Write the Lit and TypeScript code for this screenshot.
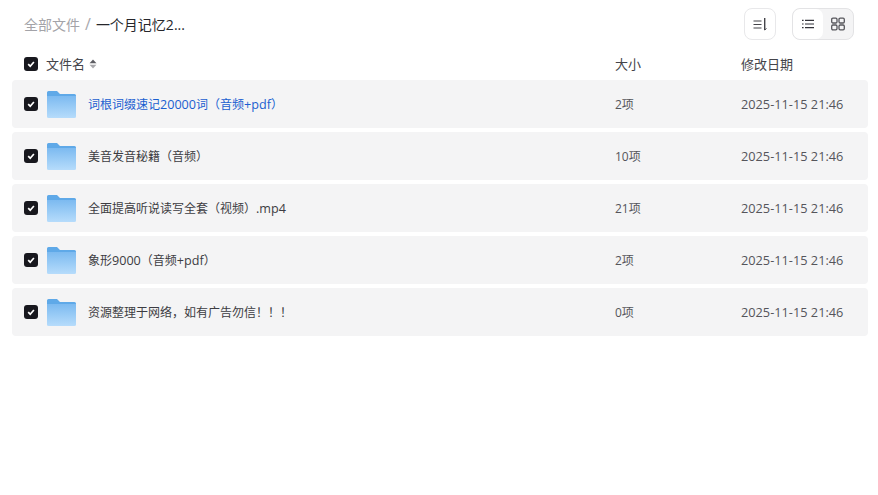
import { LitElement, html, css } from "lit";
import { customElement } from "lit/decorators.js";

const rows = [
  { name: "词根词缀速记20000词（音频+pdf）", size: "2项", active: true },
  { name: "美音发音秘籍（音频）", size: "10项" },
  { name: "全面提高听说读写全套（视频）.mp4", size: "21项" },
  { name: "象形9000（音频+pdf）", size: "2项" },
  { name: "资源整理于网络，如有广告勿信！！！", size: "0项" },
];
const date = "2025-11-15 21:46";

const check = html`<span class="check"><svg width="10" height="10" viewBox="0 0 10 10"><path d="M2.200 5.200 4.200 7.200 7.900 3" fill="none" stroke="#fff" stroke-width="1.700"/></svg></span>`;
const folder = html`<svg class="folder" width="29" height="27" viewBox="0 0 29 27">
  <defs><linearGradient id="fg" x1="0" y1="0" x2="0" y2="1"><stop offset="0" stop-color="#7cbaf0"/><stop offset="1" stop-color="#b6dcfb"/></linearGradient></defs>
  <path d="M0 1.500A1.500 1.500 0 0 1 1.500 0H10L13 3H27.500A1.500 1.500 0 0 1 29 4.500V8H0Z" fill="#5fa9e8"/>
  <path d="M0 5H29V25.500A1.500 1.500 0 0 1 27.500 27H1.500A1.500 1.500 0 0 1 0 25.500Z" fill="url(#fg)"/>
</svg>`;

const latinRuns = (s: string) =>
  s.split(/([0-9A-Za-z+.]+)/).map((part, i) => (i % 2 ? html`<span class="lat">${part}</span>` : part));

@customElement("app-root")
export class AppRoot extends LitElement {
  static styles = css`
    :host { display: block; width: 878px; height: 495px; background: #fff; font-family: "Open Sans", "Noto Sans CJK SC", sans-serif; color: #333; overflow: hidden; }
    .top { height: 48px; display: flex; align-items: center; padding: 0 24px; box-sizing: border-box; }
    .crumbs { flex: 1; display: flex; align-items: center; font-size: 14px; }
    .crumb-root { color: #a3a3a8; }
    .sep { color: #a8a8ad; font-size: 16px; margin: 0 5px 0 5px; }
    .cur { color: #26262b; }
    .sort { width: 32px; height: 32px; box-sizing: border-box; border: 1px solid #e8e8ea; border-radius: 8px; display: flex; align-items: center; justify-content: center; margin-right: 16px; }
    .seg { width: 62px; height: 32px; box-sizing: border-box; border: 1px solid #e3e3e5; border-radius: 8px; background: #f4f4f5; display: flex; overflow: hidden; }
    .seg span { flex: 1; display: flex; align-items: center; justify-content: center; }
    .seg .on { background: #fff; border-radius: 7px; }
    .head, .row { display: grid; grid-template-columns: 591px 126px 1fr; align-items: center; }
    .head { height: 32px; padding: 0 0 0 12px; margin: 0 12px; font-size: 13px; color: #44444a; box-sizing: border-box; }
    .name { display: flex; align-items: center; }
    .check { width: 14px; height: 14px; border-radius: 3px; background: #18181e; display: inline-flex; align-items: center; justify-content: center; flex: none; }
    .lift { margin-bottom: 2px; }
    .htext { margin-left: 8px; }
    .caret { margin-left: 4px; }
    .list { margin: 0 10px 0 12px; display: flex; flex-direction: column; gap: 4px; }
    .row { height: 48px; background: #f4f4f5; border-radius: 4px; padding-left: 12px; font-size: 12px; color: #55555b; }
    .date { font-size: 12.750px; }
    .folder { margin: 1px 12px 0 9px; flex: none; }
    .fname { color: #3c3c42; }
    .fname.active { color: #1a5fd0; }
    .lat { font-size: 12.600px; }
  `;
  render() {
    return html`
      <div class="top">
        <div class="crumbs"><span class="crumb-root">全部文件</span><span class="sep">/</span><span class="cur">一个月记忆2...</span></div>
        <div class="sort"><svg width="16" height="16" viewBox="0 0 16 16" fill="none" stroke="#44444a" stroke-width="1.200"><path d="M1.500 5H9.500M1.500 8.500H9.500M1.500 12H9.500"/><path d="M12.700 2V14" stroke-width="1.400"/><path d="M12.700 14 14.500 12.500" stroke-width="1"/></svg></div>
        <div class="seg">
          <span class="on"><svg width="14" height="14" viewBox="0 0 14 14" fill="none" stroke="#33333a" stroke-width="1.200"><path d="M4 3.300H13M4 7H13M4 10.700H13"/><path d="M1 3.300H2.600M1 7H2.600M1 10.700H2.600"/></svg></span>
          <span><svg width="14" height="14" viewBox="0 0 14 14" fill="none" stroke="#55555b" stroke-width="1.300"><rect x="0.700" y="1.200" width="5.300" height="4.800" rx="1.200"/><rect x="8" y="1.200" width="5.300" height="4.800" rx="1.200"/><rect x="0.700" y="8" width="5.300" height="4.800" rx="1.200"/><rect x="8" y="8" width="5.300" height="4.800" rx="1.200"/></svg></span>
        </div>
      </div>
      <div class="head">
        <div class="name">${check}<span class="htext lift">文件名</span>
          <svg class="caret" width="8" height="10" viewBox="0 0 8 10"><path d="M4 0.500 7.500 4.200H0.500Z" fill="#5c5c62"/><path d="M4 9.500 0.500 5.800H7.500Z" fill="#a8a8ac"/></svg></div>
        <div class="lift">大小</div><div class="lift">修改日期</div>
      </div>
      <div class="list">
        ${rows.map((r) => html`<div class="row">
          <div class="name">${check}${folder}<span class="fname ${r.active ? "active" : ""}">${latinRuns(r.name)}</span></div>
          <div>${r.size}</div><div class="date">${date}</div>
        </div>`)}
      </div>
    `;
  }
}
